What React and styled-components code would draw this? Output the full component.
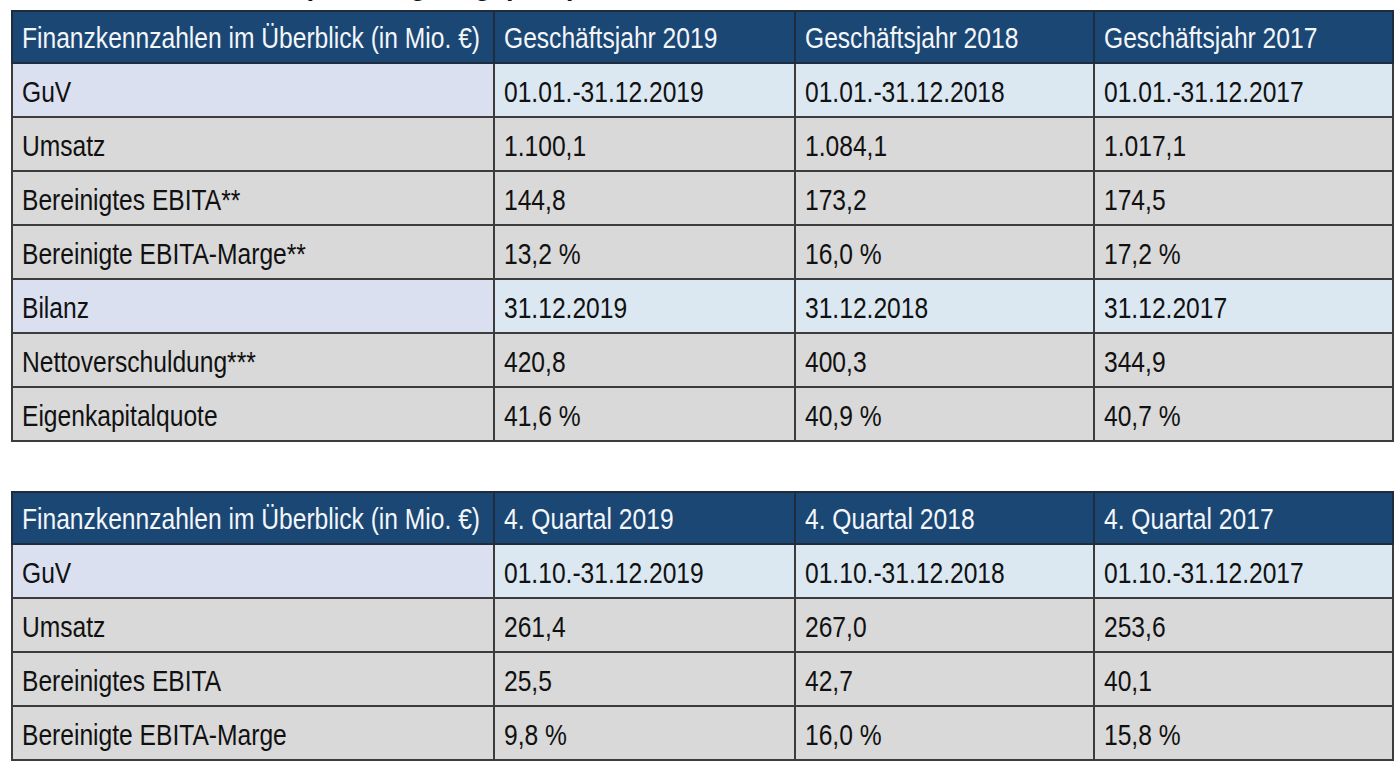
import React from "react";
import styled, { createGlobalStyle } from "styled-components";

const GlobalStyle = createGlobalStyle`
  body {
    margin: 0;
    background: #ffffff;
    font-family: "Liberation Sans", Arial, sans-serif;
  }
`;

const Page = styled.div`
  width: 1400px;
  height: 775px;
  overflow: hidden;
  padding: 0 8px 0 11px;
  box-sizing: border-box;
  display: flex;
  flex-direction: column;
  & > * {
    flex-shrink: 0;
  }
`;

// heading above the table is cut off by the screenshot, only descenders show
const Title = styled.div`
  height: 10px;
  overflow: hidden;
  display: flex;
  align-items: flex-end;
  padding-left: 30px;
  span {
    font-weight: bold;
    font-size: 30px;
    line-height: 38px;
    margin-bottom: 6px;
    color: #111;
    transform: scaleX(0.9);
    transform-origin: left bottom;
    white-space: nowrap;
  }
`;

const Table = styled.table`
  width: 1381px;
  border-collapse: collapse;
  table-layout: fixed;
  margin-bottom: ${(p) => p.gap || 0}px;
`;

const Col = styled.col`
  width: ${(p) => p.w}px;
`;

// Arial Narrow is not installed: squeeze Liberation Sans to its width
const Narrow = styled.span`
  display: inline-block;
  transform: scaleX(0.82);
  transform-origin: left center;
`;

const Cell = styled.td`
  height: 48px;
  padding: 4px 0 0 9px;
  border: 2px solid #3c3c3c;
  font-size: 30px;
  line-height: 1;
  color: #111;
  white-space: nowrap;
  overflow: hidden;
  vertical-align: middle;
  text-align: left;
  background: ${(p) =>
    p.kind === "section" ? (p.first ? "#dae0ef" : "#dbe8f1") : "#d9d9d9"};
`;

const HeadCell = styled(Cell).attrs({ as: "th" })`
  background: #1b4775;
  color: #f4f6f9;
  font-weight: normal;
  border-color: #1f2c3d;
  padding-top: 2px;
`;

const annual = {
  head: ["Finanzkennzahlen im Überblick (in Mio. €)", "Geschäftsjahr 2019", "Geschäftsjahr 2018", "Geschäftsjahr 2017"],
  rows: [
    ["section", "GuV", "01.01.-31.12.2019", "01.01.-31.12.2018", "01.01.-31.12.2017"],
    ["data", "Umsatz", "1.100,1", "1.084,1", "1.017,1"],
    ["data", "Bereinigtes EBITA**", "144,8", "173,2", "174,5"],
    ["data", "Bereinigte EBITA-Marge**", "13,2 %", "16,0 %", "17,2 %"],
    ["section", "Bilanz", "31.12.2019", "31.12.2018", "31.12.2017"],
    ["data", "Nettoverschuldung***", "420,8", "400,3", "344,9"],
    ["data", "Eigenkapitalquote", "41,6 %", "40,9 %", "40,7 %"],
  ],
};

const quarter = {
  head: ["Finanzkennzahlen im Überblick (in Mio. €)", "4. Quartal 2019", "4. Quartal 2018", "4. Quartal 2017"],
  rows: [
    ["section", "GuV", "01.10.-31.12.2019", "01.10.-31.12.2018", "01.10.-31.12.2017"],
    ["data", "Umsatz", "261,4", "267,0", "253,6"],
    ["data", "Bereinigtes EBITA", "25,5", "42,7", "40,1"],
    ["data", "Bereinigte EBITA-Marge", "9,8 %", "16,0 %", "15,8 %"],
  ],
};

const widths = [482, 301, 299, 299];

const KeyTable = ({ data, gap }) => (
  <Table gap={gap}>
    <colgroup>
      {widths.map((w, i) => (
        <Col key={i} w={w} />
      ))}
    </colgroup>
    <tbody>
      <tr>
        {data.head.map((h) => (
          <HeadCell key={h}>
            <Narrow>{h}</Narrow>
          </HeadCell>
        ))}
      </tr>
      {data.rows.map(([kind, ...cells]) => (
        <tr key={cells[0]}>
          {cells.map((c, i) => (
            <Cell key={i} kind={kind} first={i === 0}>
              <Narrow>{c}</Narrow>
            </Cell>
          ))}
        </tr>
      ))}
    </tbody>
  </Table>
);

export default function App() {
  return (
    <>
      <GlobalStyle />
      <Page>
        <Title>
          <span>Konzernkennzahlen (vorläufig, ungeprüft)</span>
        </Title>
        <KeyTable data={annual} gap={49} />
        <KeyTable data={quarter} />
      </Page>
    </>
  );
}
